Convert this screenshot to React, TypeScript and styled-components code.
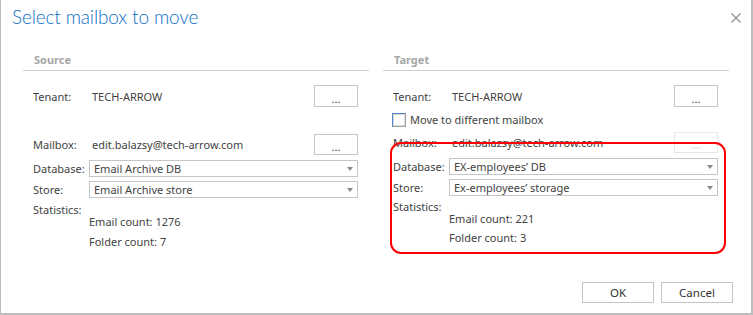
import React from "react";
import styled, { createGlobalStyle } from "styled-components";

const Global = createGlobalStyle`
  html, body { margin: 0; padding: 0; background: #ffffff; }
  body { font-family: "Noto Sans", "Open Sans", sans-serif; }
`;

const Dialog = styled.div`
  width: 753px;
  height: 315px;
  box-sizing: border-box;
  border-left: 1px solid #bdbdbd;
  border-right: 2px solid #bdbdbd;
  border-bottom: 2px solid #bdbdbd;
  background: #fff;
  display: flex;
  flex-direction: column;
  color: #424242;
  font-size: 11px;
`;

const TitleBar = styled.div`
  height: 50px;
  box-sizing: border-box;
  display: flex;
  align-items: flex-start;
  justify-content: space-between;
  padding: 5px 10px 0 11px;
`;

const Title = styled.h1`
  margin: 0;
  font-family: "Lato", "Noto Sans", sans-serif;
  font-weight: 300;
  font-size: 19px;
  letter-spacing: -0.15px;
  line-height: 24px;
  color: #0f6fc6;
`;

const CloseButton = styled.button`
  border: 0;
  background: transparent;
  padding: 0;
  margin-top: 8px;
  width: 10px;
  height: 10px;
  display: flex;
  cursor: pointer;
`;

const Columns = styled.div`
  display: grid;
  grid-template-columns: 346px 346px;
  column-gap: 14px;
  padding-left: 22px;
`;

const Column = styled.section`
  display: flex;
  flex-direction: column;
`;

const SectionHeader = styled.div`
  height: 20px;
  line-height: 20px;
  padding-left: 11px;
  border-bottom: 1px solid #cfcfcf;
  font-weight: 700;
  font-size: 11px;
  color: #a6a6a6;
`;

const Rows = styled.div`
  display: flex;
  flex-direction: column;
  padding: 14px 11px 0 10px;
`;

const Row = styled.div<{ $h: number; $mt?: number }>`
  display: grid;
  grid-template-columns: 56px 1fr auto;
  align-items: center;
  height: ${(p) => p.$h}px;
  margin-top: ${(p) => p.$mt ?? 0}px;
`;

const Label = styled.span`
  white-space: nowrap;
`;

const Value = styled.span`
  padding-left: 3px;
  white-space: nowrap;
`;

const DotsButton = styled.button<{ $h: number; $disabled?: boolean }>`
  width: 44px;
  height: ${(p) => p.$h}px;
  box-sizing: border-box;
  border: 1px solid ${(p) => (p.$disabled ? "#e6e6e6" : "#c4c4c4")};
  background: #fff;
  color: ${(p) => (p.$disabled ? "#c8c8c8" : "#333")};
  font-family: inherit;
  font-size: 11px;
  line-height: 1;
  padding: 4px 0 0;
`;

const Select = styled.div<{ $h: number }>`
  grid-column: 2 / 4;
  height: ${(p) => p.$h}px;
  box-sizing: border-box;
  border: 1px solid #c6c6c6;
  display: flex;
  align-items: center;
  justify-content: space-between;
  padding: 0 4px 0 4px;
  white-space: nowrap;
`;

const Arrow = styled.span`
  width: 0;
  height: 0;
  border-left: 3px solid transparent;
  border-right: 3px solid transparent;
  border-top: 4px solid #8a8a8a;
`;

const Stats = styled.div<{ $mt: number }>`
  display: grid;
  grid-template-columns: 56px 1fr;
  margin-top: ${(p) => p.$mt}px;
  line-height: 14px;
`;

const StatValues = styled.div<{ $gap: number }>`
  display: flex;
  flex-direction: column;
  row-gap: ${(p) => p.$gap}px;
  padding-top: 12px;
`;

const CheckRow = styled.label`
  display: flex;
  align-items: center;
  height: 15px;
  margin-top: 5px;
  margin-left: -1px;
`;

const Box = styled.span`
  width: 14px;
  height: 14px;
  box-sizing: border-box;
  border: 1px solid #a0a0a0;
  border-left-color: #4f86c6;
  border-top-color: #4f86c6;
  box-shadow: inset 0 0 0 1px #dadada;
  background: #fff;
  margin-right: 4px;
`;

const Highlight = styled.div`
  position: relative;
  display: flex;
  flex-direction: column;
  &::after {
    content: "";
    position: absolute;
    top: -11px;
    left: -3px;
    right: -8px;
    bottom: -9px;
    border: 2px solid #ff0000;
    border-radius: 11px;
    pointer-events: none;
  }
`;

const Footer = styled.div`
  margin-top: auto;
  display: flex;
  justify-content: flex-end;
  column-gap: 7px;
  padding: 0 18px 10px 0;
`;

const FooterButton = styled.button`
  width: 72px;
  height: 21px;
  box-sizing: border-box;
  border: 1px solid #c4c4c4;
  background: #fff;
  color: #333;
  font-family: inherit;
  font-size: 11.5px;
  padding: 0;
`;

export default function App() {
  return (
    <>
      <Global />
      <Dialog>
        <TitleBar>
          <Title>Select mailbox to move</Title>
          <CloseButton aria-label="Close">
            <svg width="10" height="10" viewBox="0 0 10 10">
              <path d="M0.5 0.5 L9.5 9.5 M9.5 0.5 L0.5 9.5" stroke="#8c8c8c" strokeWidth="1.1" />
            </svg>
          </CloseButton>
        </TitleBar>
        <Columns>
          <Column>
            <SectionHeader>Source</SectionHeader>
            <Rows>
              <Row $h={22}>
                <Label>Tenant:</Label>
                <Value>TECH-ARROW</Value>
                <DotsButton $h={22}>...</DotsButton>
              </Row>
              <Row $h={21} $mt={27}>
                <Label>Mailbox:</Label>
                <Value>edit.balazsy@tech-arrow.com</Value>
                <DotsButton $h={21}>...</DotsButton>
              </Row>
              <Row $h={17} $mt={5}>
                <Label>Database:</Label>
                <Select $h={17}>Email Archive DB<Arrow /></Select>
              </Row>
              <Row $h={17} $mt={4}>
                <Label>Store:</Label>
                <Select $h={17}>Email Archive store<Arrow /></Select>
              </Row>
              <Stats $mt={5}>
                <Label>Statistics:</Label>
                <StatValues $gap={6}>
                  <span>Email count: 1276</span>
                  <span>Folder count: 7</span>
                </StatValues>
              </Stats>
            </Rows>
          </Column>
          <Column>
            <SectionHeader>Target</SectionHeader>
            <Rows>
              <Row $h={22}>
                <Label>Tenant:</Label>
                <Value>TECH-ARROW</Value>
                <DotsButton $h={22}>...</DotsButton>
              </Row>
              <CheckRow>
                <Box />
                Move to different mailbox
              </CheckRow>
              <Row $h={21} $mt={5}>
                <Label>Mailbox:</Label>
                <Value>edit.balazsy@tech-arrow.com</Value>
                <DotsButton $h={21} $disabled>...</DotsButton>
              </Row>
              <Highlight>
                <Row $h={17} $mt={5}>
                  <Label>Database:</Label>
                  <Select $h={17}>EX-employees’ DB<Arrow /></Select>
                </Row>
                <Row $h={17} $mt={4}>
                  <Label>Store:</Label>
                  <Select $h={17}>Ex-employees’ storage<Arrow /></Select>
                </Row>
                <Stats $mt={4}>
                  <Label>Statistics:</Label>
                  <StatValues $gap={5}>
                    <span>Email count: 221</span>
                    <span>Folder count: 3</span>
                  </StatValues>
                </Stats>
              </Highlight>
            </Rows>
          </Column>
        </Columns>
        <Footer>
          <FooterButton>OK</FooterButton>
          <FooterButton>Cancel</FooterButton>
        </Footer>
      </Dialog>
    </>
  );
}
